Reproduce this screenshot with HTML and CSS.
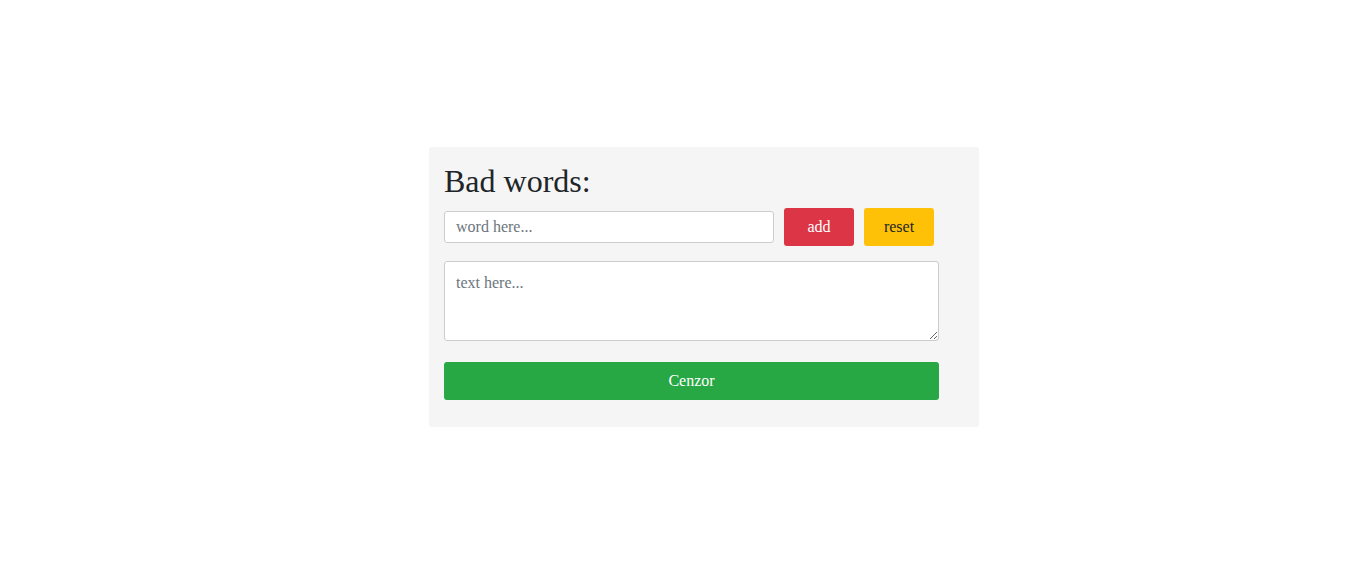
FILE: index.html
```html
<!DOCTYPE html>
<html>
<head>
<meta charset="utf-8">
<link rel="stylesheet" href="styles.css">
</head>
<body>
<div class="page">
  <div class="card">
    <h1 class="title">Bad words:</h1>
    <div class="row">
      <input class="word" type="text" placeholder="word here...">
      <button class="btn btn-add">add</button>
      <button class="btn btn-reset">reset</button>
    </div>
    <textarea class="text" placeholder="text here..."></textarea>
    <button class="btn btn-cenzor">Cenzor</button>
  </div>
</div>
</body>
</html>
```
FILE: styles.css
```css
html, body {
  margin: 0;
  padding: 0;
  background: #fff;
  font-family: "Liberation Serif", "Times New Roman", serif;
  color: #212529;
}
.page {
  display: flex;
  justify-content: center;
  padding-top: 147px;
  padding-left: 47px;
}
.card {
  width: 550px;
  box-sizing: border-box;
  background: #f5f5f5;
  border-radius: 3px;
  padding: 15px 15px 27px 15px;
  display: flex;
  flex-direction: column;
}
.title {
  margin: 0;
  font-size: 32px;
  font-weight: normal;
  line-height: 38px;
}
.row {
  display: flex;
  align-items: center;
  gap: 10px;
  margin-top: 8px;
}
.word {
  width: 330px;
  height: 32px;
  box-sizing: border-box;
  border: 1px solid #ccc;
  border-radius: 3px;
  padding: 0 11px;
  font-family: inherit;
  font-size: 16px;
  color: #495057;
  background: #fff;
  outline: none;
}
.word::placeholder, .text::placeholder {
  color: #6c757d;
}
.btn {
  border: none;
  border-radius: 3px;
  font-family: inherit;
  font-size: 16px;
  height: 38px;
  padding: 0;
  cursor: pointer;
}
.btn-add {
  width: 70px;
  background: #dc3545;
  color: #fff;
}
.btn-reset {
  width: 70px;
  background: #ffc107;
  color: #212529;
}
.text {
  margin-top: 15px;
  width: 495px;
  height: 80px;
  box-sizing: border-box;
  border: 1px solid #ccc;
  border-radius: 3px;
  padding: 12px 11px;
  font-family: inherit;
  font-size: 16px;
  background: #fff;
  resize: both;
  outline: none;
  display: block;
}
.btn-cenzor {
  margin-top: 21px;
  width: 495px;
  background: #28a745;
  color: #fff;
}
```
